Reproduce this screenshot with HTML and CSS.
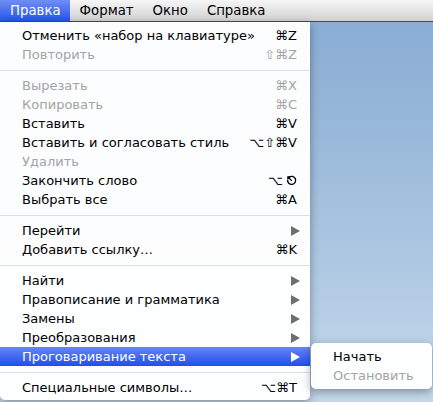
FILE: index.html
```html
<!DOCTYPE html>
<html>
<head>
<meta charset="utf-8">
<link rel="stylesheet" href="styles.css">
</head>
<body>
<div class="screen">
  <div class="menubar">
    <div class="mb-item active">Правка</div>
    <div class="mb-item">Формат</div>
    <div class="mb-item">Окно</div>
    <div class="mb-item">Справка</div>
  </div>
  <div class="desk">
    <div class="menu">
      <div class="row"><span>Отменить «набор на клавиатуре»</span><span class="key">⌘Z</span></div>
      <div class="row dis"><span>Повторить</span><span class="key">⇧⌘Z</span></div>
      <div class="sep"></div>
      <div class="row dis"><span>Вырезать</span><span class="key">⌘X</span></div>
      <div class="row dis"><span>Копировать</span><span class="key">⌘C</span></div>
      <div class="row"><span>Вставить</span><span class="key">⌘V</span></div>
      <div class="row"><span>Вставить и согласовать стиль</span><span class="key">⌥⇧⌘V</span></div>
      <div class="row dis"><span>Удалить</span></div>
      <div class="row"><span>Закончить слово</span><span class="key">⌥<svg class="esc" viewBox="0 0 12 12" width="11" height="11"><path d="M3.2 2.6 A4.4 4.4 0 1 1 1.8 5.2" fill="none" stroke="#000" stroke-width="1.5"/><path d="M6.4 6.4 L2.2 2.2 M2 4.6 L2 2 L4.6 2" fill="none" stroke="#000" stroke-width="1.4"/></svg></span></div>
      <div class="row"><span>Выбрать все</span><span class="key">⌘A</span></div>
      <div class="sep"></div>
      <div class="row sub"><span>Перейти</span><span class="arrow"></span></div>
      <div class="row"><span>Добавить ссылку…</span><span class="key">⌘K</span></div>
      <div class="sep"></div>
      <div class="row sub"><span>Найти</span><span class="arrow"></span></div>
      <div class="row sub"><span>Правописание и грамматика</span><span class="arrow"></span></div>
      <div class="row sub"><span>Замены</span><span class="arrow"></span></div>
      <div class="row sub"><span>Преобразования</span><span class="arrow"></span></div>
      <div class="row sub hl"><span>Проговаривание текста</span><span class="arrow"></span></div>
      <div class="sep"></div>
      <div class="row"><span>Специальные символы…</span><span class="key">⌥⌘T</span></div>
    </div>
    <div class="submenu">
      <div class="row"><span>Начать</span></div>
      <div class="row dis"><span>Остановить</span></div>
    </div>
  </div>
</div>
</body>
</html>
```

FILE: styles.css
```css
html, body {
  margin: 0;
  padding: 0;
}
body {
  width: 433px;
  height: 402px;
  overflow: hidden;
  font-family: "DejaVu Sans", "Liberation Sans", sans-serif;
  font-size: 13px;
  color: #000;
}
.screen {
  width: 433px;
  height: 402px;
  background: linear-gradient(180deg, #87abd3 0%, #9dbbdb 40%, #c6d9ec 100%);
  display: flex;
  flex-direction: column;
}
.menubar {
  height: 21px;
  border-bottom: 1px solid #4a4a4a;
  background: linear-gradient(180deg, #f6f6f6 0%, #e4e4e4 50%, #d0d0d0 100%);
  display: flex;
  align-items: stretch;
  font-size: 13.3px;
}
.mb-item {
  padding: 0 9px 0 10px;
  display: flex;
  align-items: center;
}
.mb-item.active {
  color: #fff;
  background: linear-gradient(180deg, #6f8ff7 0%, #4a70f0 50%, #2257ea 100%);
}
.desk {
  position: relative;
  flex: 1;
}
.menu {
  width: 310px;
  padding: 4px 0 3px;
  background: rgba(255, 255, 255, 0.97);
  border-radius: 0 0 5px 5px;
  box-shadow: 0 3px 10px rgba(0, 0, 0, 0.35);
}
.row {
  height: 19px;
  padding: 0 13px 0 22px;
  display: flex;
  align-items: center;
  justify-content: space-between;
  white-space: nowrap;
}
.row.sub {
  padding-right: 10px;
}
.row.dis {
  color: #a3a3a3;
}
.row.hl {
  color: #fff;
  background: linear-gradient(180deg, #6686f6 0%, #4369ef 50%, #1d50ea 100%);
}
.key {
  display: flex;
  align-items: center;
}
.esc {
  margin-left: 3px;
}
.arrow {
  width: 0;
  height: 0;
  border-top: 5px solid transparent;
  border-bottom: 5px solid transparent;
  border-left: 9px solid #6e6e6e;
}
.row.hl .arrow {
  border-left-color: #fff;
}
.sep {
  height: 12px;
  display: flex;
  align-items: center;
}
.sep::before {
  content: "";
  flex: 1;
  height: 1px;
  background: #dedede;
}
.submenu {
  position: absolute;
  left: 311px;
  top: 321px;
  width: 121px;
  padding: 4px 0 4px;
  background: rgba(255, 255, 255, 0.97);
  border-radius: 5px;
  box-shadow: 0 3px 10px rgba(0, 0, 0, 0.35);
}
.submenu .row {
  padding-left: 22px;
}
```
